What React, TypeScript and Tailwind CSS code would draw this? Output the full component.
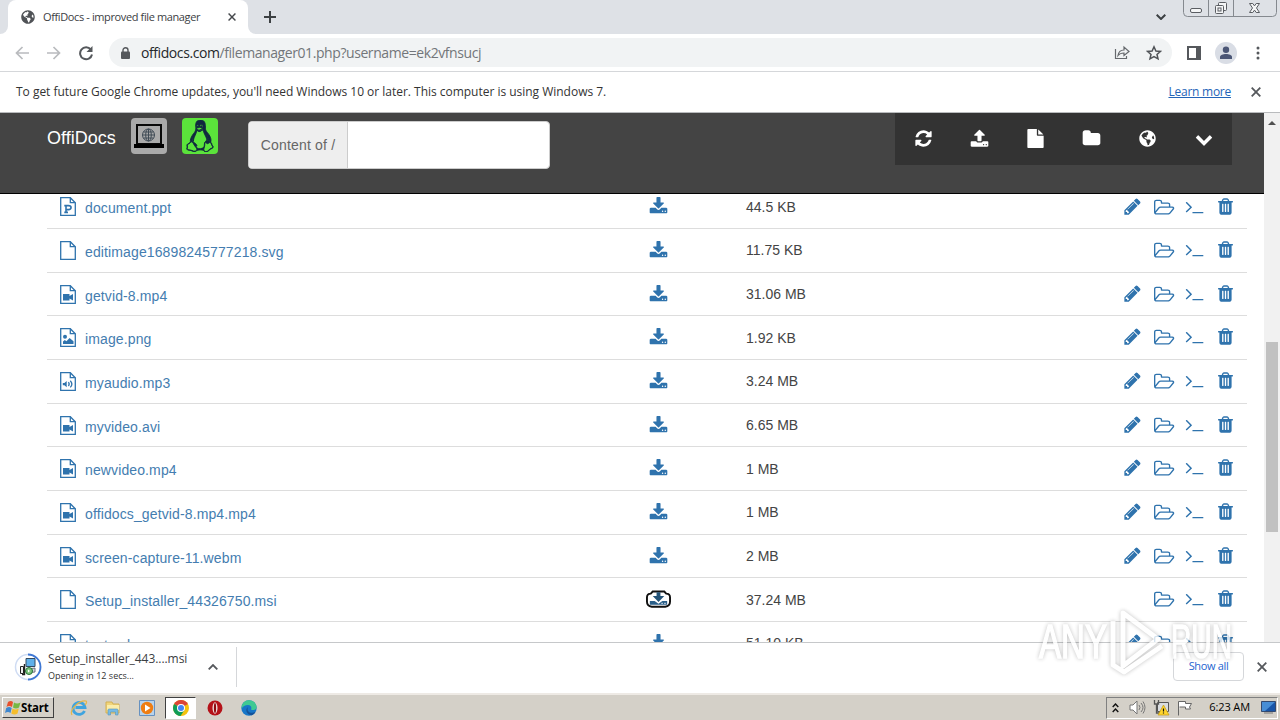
import { FaLinux, FaGlobeAmericas } from "react-icons/fa";

const paths = {
  download:
    "M1344 1344q0-26-19-45t-45-19-45 19-19 45 19 45 45 19 45-19 19-45zm256 0q0-26-19-45t-45-19-45 19-19 45 19 45 45 19 45-19 19-45zm128-224v320q0 40-28 68t-68 28h-1472q-40 0-68-28t-28-68v-320q0-40 28-68t68-28h465l135 136q58 56 136 56t136-56l136-136h464q40 0 68 28t28 68zm-325-569q17 41-14 70l-448 448q-18 19-45 19t-45-19l-448-448q-31-29-14-70 17-39 59-39h256v-448q0-26 19-45t45-19h256q26 0 45 19t19 45v448h256q42 0 59 39z",
  folderOpen:
    "M1781 1055q0-31-53-31h-1088q-40 0-85.5 21.5t-71.5 52.5l-294 363q-18 24-18 40 0 31 53 31h1088q40 0 86-22t71-53l294-363q18-22 18-39zm-1141-159h768v-160q0-40-28-68t-68-28h-576q-40 0-68-28t-28-68v-64q0-40-28-68t-68-28h-320q-40 0-68 28t-28 68v853l256-315q44-53 116-87.5t140-34.5zm1269 159q0 62-46 120l-295 363q-43 53-116 87.5t-140 34.5h-1088q-92 0-158-66t-66-158v-960q0-92 66-158t158-66h320q92 0 158 66t66 158v32h544q92 0 158 66t66 158v160h192q54 0 99 24.5t67 70.5q15 32 15 68z",
  trash:
    "M704 1376v-704q0-14-9-23t-23-9h-64q-14 0-23 9t-9 23v704q0 14 9 23t23 9h64q14 0 23-9t9-23zm256 0v-704q0-14-9-23t-23-9h-64q-14 0-23 9t-9 23v704q0 14 9 23t23 9h64q14 0 23-9t9-23zm256 0v-704q0-14-9-23t-23-9h-64q-14 0-23 9t-9 23v704q0 14 9 23t23 9h64q14 0 23-9t9-23zm-544-992h448l-48-117q-7-9-17-11h-317q-10 2-17 11zm928 32v64q0 14-9 23t-23 9h-96v948q0 83-47 143.5t-113 60.5h-832q-66 0-113-58.5t-47-141.5v-952h-96q-14 0-23-9t-9-23v-64q0-14 9-23t23-9h309l70-167q15-37 54-63t79-26h320q40 0 79 26t54 63l70 167h309q14 0 23 9t9 23z",
  pencil:
    "M491 1536l91-91-235-235-91 91v107h128v128h107zm523-928q0-22-22-22-10 0-17 7l-542 542q-7 7-7 17 0 22 22 22 10 0 17-7l542-542q7-7 7-17zm-54-192l416 416-832 832h-416v-416zm683 96q0 53-37 90l-166 166-416-416 166-165q36-38 90-38 53 0 91 38l235 234q37 39 37 91z",
  terminal:
    "M649 983l-466 466q-10 10-23 10t-23-10l-50-50q-10-10-10-23t10-23l393-393-393-393q-10-10-10-23t10-23l50-50q10-10 23-10t23 10l466 466q10 10 10 23t-10 23zm1079 457v64q0 14-9 23t-23 9h-960q-14 0-23-9t-9-23v-64q0-14 9-23t23-9h960q14 0 23 9t9 23z",
  refresh:
    "M1639 1056q0 5-1 7-64 268-268 434.5t-478 166.5q-146 0-282.5-55t-243.5-157l-129 129q-19 19-45 19t-45-19-19-45v-448q0-26 19-45t45-19h448q26 0 45 19t19 45-19 45l-137 137q71 66 161 102t187 36q134 0 250-65t186-179q11-17 53-117 8-23 30-23h192q13 0 22.5 9.5t9.5 22.5zm25-800v448q0 26-19 45t-45 19h-448q-26 0-45-19t-19-45 19-45l138-138q-148-137-349-137-134 0-250 65t-186 179q-11 17-53 117-8 23-30 23h-199q-13 0-22.5-9.5t-9.5-22.5v-7q65-268 270-434.5t480-166.5q146 0 284 55.5t245 156.5l130-129q19-19 45-19t45 19 19 45z",
  upload:
    "M1344 1472q0-26-19-45t-45-19-45 19-19 45 19 45 45 19 45-19 19-45zm256 0q0-26-19-45t-45-19-45 19-19 45 19 45 45 19 45-19 19-45zm128-224v320q0 40-28 68t-68 28h-1472q-40 0-68-28t-28-68v-320q0-40 28-68t68-28h427q21 56 70.5 92t110.5 36h256q61 0 110.5-36t70.5-92h427q40 0 68 28t28 68zm-325-648q-17 40-59 40h-256v448q0 26-19 45t-45 19h-256q-26 0-45-19t-19-45v-448h-256q-42 0-59-40-17-39 14-69l448-448q18-19 45-19t45 19l448 448q31 30 14 69z",
  file: "M1152 512v-472q22 14 36 28l408 408q14 14 28 36h-472zm-128 32q0 40 28 68t68 28h544v1056q0 40-28 68t-68 28h-1344q-40 0-68-28t-28-68v-1600q0-40 28-68t68-28h800v544z",
  folder:
    "M1728 608v704q0 92-66 158t-158 66h-1216q-92 0-158-66t-66-158v-960q0-92 66-158t158-66h320q92 0 158 66t66 158v32h672q92 0 158 66t66 158z",
  chevron:
    "M1683 808l-742 741q-19 19-45 19t-45-19l-742-741q-19-19-19-45.5t19-45.5l166-165q19-19 45-19t45 19l531 531 531-531q19-19 45-19t45 19l166 165q19 19 19 45.5t-19 45.5z",
};

type IconName = keyof typeof paths;

function Icon({ name, className = "size-[19px]" }: { name: IconName; className?: string }) {
  return (
    <svg viewBox="0 0 1792 1792" className={`shrink-0 overflow-visible fill-current ${className}`}>
      <path d={paths[name]} />
    </svg>
  );
}

type Kind = "plain" | "ppt" | "video" | "image" | "audio";

type Entry = {
  name: string;
  size: string;
  kind: Kind;
  editable: boolean;
  focused?: boolean;
};

const entries: Entry[] = [
  { name: "document.ppt", size: "44.5 KB", kind: "ppt", editable: true },
  { name: "editimage16898245777218.svg", size: "11.75 KB", kind: "plain", editable: false },
  { name: "getvid-8.mp4", size: "31.06 MB", kind: "video", editable: true },
  { name: "image.png", size: "1.92 KB", kind: "image", editable: true },
  { name: "myaudio.mp3", size: "3.24 MB", kind: "audio", editable: true },
  { name: "myvideo.avi", size: "6.65 MB", kind: "video", editable: true },
  { name: "newvideo.mp4", size: "1 MB", kind: "video", editable: true },
  { name: "offidocs_getvid-8.mp4.mp4", size: "1 MB", kind: "video", editable: true },
  { name: "screen-capture-11.webm", size: "2 MB", kind: "video", editable: true },
  { name: "Setup_installer_44326750.msi", size: "37.24 MB", kind: "plain", editable: false, focused: true },
  { name: "testxml", size: "51.10 KB", kind: "plain", editable: true },
];

function FileIcon({ kind }: { kind: Kind }) {
  return (
    <svg viewBox="0 0 16 19" className="h-[19px] w-4 shrink-0" fill="none" stroke="currentColor" strokeWidth="1.3">
      <path d="M.7.7h9.6l5 5v12.6H.7z" />
      <path d="M10.3.7v5h5" />
      {kind === "ppt" && <path d="M4.3 8.6h4.2c3.4 0 3.4 4 0 4H6.2M6 8.6v6.8M4.3 15.4H8" strokeWidth="1.6" />}
      {kind === "video" && <path d="M3 9h6.5v2l3.500-2v6.500l-3.500-2v2H3z" fill="currentColor" stroke="none" />}
      {kind === "image" && (
        <g fill="currentColor" stroke="none">
          <circle cx="5" cy="8.700" r="2" />
          <path d="M3 16v-2.500l1.800-1.600 1.600 1.400 3.200-3.400 3.900 3.400V16z" />
        </g>
      )}
      {kind === "audio" && (
        <>
          <path d="M2.800 11h1.600l2.300-2v6.200l-2.300-2H2.800z" fill="currentColor" stroke="none" />
          <path d="M8.400 10.200c1 1.200 1 2.600 0 3.800M10.300 8.800c2 2.200 2 4.600 0 6.600" />
        </>
      )}
    </svg>
  );
}

function Row({ entry }: { entry: Entry }) {
  return (
    <div className="flex h-[43.67px] shrink-0 border-b border-[#ddd] pt-3 text-[#2f73ad]">
      <div className="flex w-[599px] pl-[13px]">
        <FileIcon kind={entry.kind} />
        <span className="ml-[9px] mt-[1px] text-[14px] leading-[20px] tracking-[0.12px] text-[#447db0]">{entry.name}</span>
      </div>
      <div className="w-[100px] pl-[2.500px]">
        {entry.focused ? (
          <svg viewBox="0 0 26 20" className="-ml-[2.500px] -mt-px h-5 w-[25px]">
            <path
              d="M7 2.200h12l2 2.200c2.800 0 4 1.300 4 4v4.300c0 3.500-2 5-5 5.300H6c-3-.3-5-1.800-5-5.300V8.400c0-2.700 1.200-4 4-4z"
              fill="#fff"
              stroke="#111"
              strokeWidth="2"
            />
            <path d="M11 3h4v4h4l-6 6-6-6h4z" fill="#225277" />
            <path d="M4 12h5l4 3 4-3h5v4H4z" fill="#2a5f89" />
            <path d="M16 14.500h1.500M19 14.500h1.500" stroke="#fff" />
          </svg>
        ) : (
          <Icon name="download" />
        )}
      </div>
      <span className="-mt-[0.5px] text-[14px] leading-[20px] text-[#444]">{entry.size}</span>
      <div className="-mt-[0.8px] ml-auto flex gap-3 pr-[11.600px]">
        {entry.editable && <Icon name="pencil" />}
        <Icon name="folderOpen" />
        <Icon name="terminal" />
        <Icon name="trash" />
      </div>
    </div>
  );
}

function Cross({ className = "size-[10px]" }: { className?: string }) {
  return (
    <svg viewBox="0 0 10 10" className={`shrink-0 ${className}`} stroke="currentColor" strokeWidth="1.8">
      <path d="M.7.7l8.600 8.600M9.300.7L.7 9.300" />
    </svg>
  );
}

function TabStrip() {
  return (
    <div className="flex h-[34px] bg-[#dee1e6]">
      <div className="w-2 bg-white">
        <div className="h-full rounded-br-lg bg-[#dee1e6]" />
      </div>
      <div className="flex h-[34px] w-60 items-center rounded-t-lg bg-white pl-[13px] pr-3">
        <FaGlobeAmericas className="size-[14px] text-[#505357]" />
        <span className="ml-2 whitespace-nowrap text-[11px] tracking-[-0.38px] text-[#3c4043]">OffiDocs - improved file manager</span>
        <Cross className="ml-auto size-[8px] text-[#45484c]" />
      </div>
      <div className="w-2 self-end bg-white">
        <div className="h-2 rounded-bl-lg bg-[#dee1e6]" />
      </div>
      <svg viewBox="0 0 12 12" className="ml-2 mt-[11px] size-3" stroke="#3c4043" strokeWidth="2">
        <path d="M6 0v12M0 6h12" />
      </svg>
      <svg viewBox="0 0 10 6" className="ml-auto mr-[17px] mt-[14px] h-[6px] w-[10px]" fill="none" stroke="#3c4043" strokeWidth="2">
        <path d="M.7.7L5 5 9.300.7" />
      </svg>
      <svg viewBox="0 0 94 17" className="mr-[3px] h-[17px] w-[94px]" fill="none" stroke="#85898f">
        <path d="M.5 0v12.500q0 4 4 4h85q4 0 4-4V0M25.500 0v16M50.500 0v16" />
        <g stroke="#5a5d62" fill="#f4f5f6">
          <rect x="7.500" y="8.500" width="11" height="4" rx="1.500" />
          <rect x="35.500" y="2.500" width="8" height="8" rx="1" />
          <rect x="32.500" y="5.500" width="8" height="8" rx="1" />
          <rect x="35" y="8" width="3" height="3" />
          <path d="M66.500 3.500h3.300l1.700 2.400 1.700-2.400h3.300l-3 4.500 3 4.500h-3.300l-1.700-2.400-1.700 2.400h-3.300l3-4.500z" />
        </g>
      </svg>
    </div>
  );
}

function Toolbar() {
  return (
    <div className="flex h-[38px] items-center border-b border-[#d5d7da] bg-white pl-[15px] pr-[20px]">
      <svg viewBox="0 0 78 16" className="h-4 w-[78px]" fill="none" stroke="#b9bbbe" strokeWidth="1.700">
        <path d="M14 8H1.500M7.500 2l-6 6 6 6M32 8h12.500M38.500 2l6 6-6 6" />
        <path d="M75.800 4.500A6 6 0 1 0 77 9.500" stroke="#55585c" strokeWidth="2" />
        <path d="M77.500 1v6h-6z" fill="#55585c" stroke="none" />
      </svg>
      <div className="ml-[16px] flex h-[29px] w-[1063px] items-center rounded-full bg-[#f1f3f4] pl-3 pr-[10px]">
        <svg viewBox="0 0 9 12" className="h-3 w-[9px]">
          <rect y="4.500" width="9" height="7.500" rx="1" fill="#55585c" />
          <path d="M2 5V3.200a2.500 2.500 0 0 1 5 0V5" fill="none" stroke="#55585c" strokeWidth="1.400" />
        </svg>
        <span className="ml-[11px] text-[14px] tracking-[-0.42px] text-[#73767a]">
          <span className="text-[#26282b]">offidocs.com</span>/filemanager01.php?username=ek2vfnsucj
        </span>
        <svg viewBox="0 0 16 15" className="ml-auto h-[15px] w-4" fill="none" stroke="#66696d" strokeWidth="1.200">
          <path d="M1.500 4v9.500h11V11M4 10.500c.5-3.500 2.500-5.500 6-5.500V2l5 4.500-5 4V8c-2.800 0-4.600.7-6 2.500z" />
        </svg>
        <svg viewBox="0 0 16 16" className="ml-4 size-4" fill="none" stroke="#505357" strokeWidth="1.500">
          <path d="M8 1.800l1.900 4.200 4.500.4-3.400 3 1 4.400L8 11.500l-4 2.300 1-4.400-3.400-3 4.500-.4z" />
        </svg>
      </div>
      <svg viewBox="0 0 14 14" className="ml-[15px] size-[14px]">
        <path d="M1 1h12v12H1z" fill="#fff" stroke="#55585c" strokeWidth="2" />
        <path d="M9 0h5v14H9z" fill="#55585c" />
      </svg>
      <svg viewBox="0 0 22 22" className="ml-[14px] size-[22px]">
        <circle cx="11" cy="11" r="11" fill="#d9dde5" />
        <circle cx="11" cy="7.800" r="3.200" fill="#4b5676" />
        <path d="M5 17v-2c0-4 12-4 12 0v2z" fill="#4b5676" />
      </svg>
      <svg viewBox="0 0 4 14" className="ml-auto h-[14px] w-1" fill="#55585c">
        <circle cx="2" cy="2" r="1.500" />
        <circle cx="2" cy="7" r="1.500" />
        <circle cx="2" cy="12" r="1.500" />
      </svg>
    </div>
  );
}

function PageHeader() {
  const actions: IconName[] = ["refresh", "upload", "file", "folder"];
  return (
    <div className="flex h-[81px] shrink-0 border-b border-black bg-[#444] pl-[47px]">
      <span className="mt-[13px] w-[84px] text-[18px] leading-6 text-white">OffiDocs</span>
      <div className="mt-[5px] size-9 rounded bg-[#aaa]">
        <svg viewBox="0 0 36 36" className="size-9" fill="none">
          <path d="M6 7h24v19H6z" stroke="#090909" strokeWidth="2" />
          <path d="M3 26h30v4H3z" fill="#000" />
          <g stroke="#3f4a55" strokeWidth="1">
            <circle cx="17.500" cy="17" r="6" />
            <ellipse cx="17.500" cy="17" rx="2.800" ry="6" />
            <path d="M11.500 17h12M17.500 11v12M12.500 14h10M12.500 20h10" />
          </g>
        </svg>
      </div>
      <div className="ml-[15px] mt-[5px] flex size-9 items-center justify-center rounded bg-[#5be33b]">
        <FaLinux className="h-8 w-7 stroke-[#10283f] stroke-[14px] text-[#10283f]" />
      </div>
      <div className="ml-[30px] mt-[8px] flex h-12 w-[302px] overflow-hidden rounded border border-[#ccc] bg-white">
        <span className="flex w-[99px] items-center justify-center whitespace-nowrap border-r border-[#ccc] bg-[#eee] text-[14px] tracking-[0.18px] text-[#666]">
          Content of /
        </span>
      </div>
      <div className="ml-auto mr-8 flex h-[52px] w-[337px] bg-[#333] text-white">
        {actions.map((name) => (
          <div key={name} className="flex h-[50px] w-[56.200px] items-center justify-center">
            <Icon name={name} />
          </div>
        ))}
        <div className="flex h-[50px] w-[56.200px] items-center justify-center">
          <FaGlobeAmericas className="size-[17px]" />
        </div>
        <div className="flex h-[50px] w-[56px] items-center justify-center pt-[2px]">
          <Icon name="chevron" className="size-[18px]" />
        </div>
      </div>
    </div>
  );
}

function Watermark() {
  return (
    <div className="pointer-events-none absolute left-[1036px] top-[606px] opacity-80">
      <svg viewBox="0 0 200 70" className="h-[70px] w-[200px] overflow-visible drop-shadow-[0_0_2px_rgba(0,0,0,0.3)]" fill="none">
        <g fill="#fff" stroke="#fff" strokeWidth="1.500" fontFamily="Liberation Sans" fontSize="48">
          <text x="3" y="52" textLength="68" lengthAdjust="spacingAndGlyphs">
            ANY
          </text>
          <text x="135" y="52" textLength="61" lengthAdjust="spacingAndGlyphs">
            RUN
          </text>
        </g>
        <path d="M87 7l35 26-35 27zM77 15v44l11 7 38-26" stroke="#fff" strokeWidth="5" strokeLinejoin="round" />
      </svg>
    </div>
  );
}

function DownloadShelf() {
  return (
    <div className="flex h-[51px] border-t border-[#c6c8ca] bg-white">
      <svg viewBox="0 0 28 28" className="ml-[14px] mt-[10px] size-7" fill="none">
        <circle cx="14" cy="14" r="12.500" stroke="#cfdcf3" strokeWidth="1.500" />
        <path d="M14 1.500A12.500 12.500 0 0 1 14 26.500" stroke="#3f78d4" strokeWidth="1.800" />
        <path d="M12 5.500h9v8h-9z" fill="#5fb0ea" stroke="#344a60" />
        <path d="M13 16l8-1v4l-8 1z" fill="#cfd5dc" stroke="#556" strokeWidth=".8" />
        <path d="M6.500 13.500h3v7h-3z" fill="#eee" stroke="#222" />
        <path d="M10.500 11v10.500H8" stroke="#222" strokeWidth="1.400" />
        <circle cx="15" cy="18" r="3.500" fill="#7cc47c" stroke="#267038" />
        <path d="M14 16.500v3l2-1.500z" fill="#fff" />
      </svg>
      <div className="ml-[6px] mt-[8px] w-[144px] whitespace-nowrap">
        <div className="text-[12px] leading-4 tracking-[-0.05px] text-[#3c4043]">Setup_installer_443....msi</div>
        <div className="mt-[2px] text-[9px] leading-[14px] text-[#333]">Opening in 12 secs...</div>
      </div>
      <svg viewBox="0 0 10 6" className="ml-[16px] mt-[21px] h-[6px] w-[10px]" fill="none" stroke="#55585c" strokeWidth="1.800">
        <path d="M.7 5.300L5 1l4.300 4.300" />
      </svg>
      <div className="ml-[18px] mt-1 h-10 w-px bg-[#d5d7da]" />
      <div className="ml-auto mr-[13px] mt-[9px] flex h-[29px] w-[71px] items-center justify-center rounded border border-[#d5d7da] text-[11px] tracking-[-0.35px] text-[#2464cf]">
        Show all
      </div>
      <Cross className="mr-[13px] mt-[19px] size-[10px] text-[#55585c]" />
    </div>
  );
}

function Taskbar() {
  return (
    <div className="flex h-[27px] items-center border-t-2 border-[#eeeae5] bg-[#d4d0c8]">
      <div className="ml-[2px] flex h-[21px] w-[52px] items-center border border-b-[#404040] border-l-white border-r-[#404040] border-t-white pl-[2px]">
        <svg viewBox="0 0 16 15" className="h-[15px] w-4">
          <path d="M3 2q3-2 5 0L7 7Q4 5 1.500 7z" fill="#e8502c" />
          <path d="M9 2.500q3 2 6.500 0L14 7.500q-3 2-6 0z" fill="#76b843" />
          <path d="M1.200 8q3-2 5.500 0l-1.200 5Q3 11 0 13z" fill="#3e87cf" />
          <path d="M7.500 8.500q3 2 6.300 0l-1.300 5q-3 2-6.200 0z" fill="#f5bd2c" />
        </svg>
        <span className="text-[11.500px] font-bold tracking-[-0.2px] text-black">Start</span>
      </div>
      <svg viewBox="0 0 18 18" className="ml-[16px] size-[18px]" fill="none">
        <path d="M14.500 12a6 6 0 1 1 .5-3.500H5.500" stroke="#3fa4df" strokeWidth="2.800" />
        <path d="M2 16C-1 11 9 1 16 2c1 1 0 3-1 4" stroke="#e5b74a" strokeWidth="1.200" />
      </svg>
      <svg viewBox="0 0 18 18" className="ml-[16px] size-[18px]">
        <path d="M2 3h6l1 2h6v9H2z" fill="#f1d57a" stroke="#d2b055" />
        <path d="M3 6h12v5H3z" fill="#fbedaa" />
        <path d="M4 16v-5q0-1 1-1h8q1 0 1 1v5h-2.500v-3h-5v3z" fill="#78bbe4" stroke="#5795ba" strokeWidth=".6" />
      </svg>
      <svg viewBox="0 0 16 16" className="ml-[17px] size-4">
        <path d="M.5.5h15v15H.5z" fill="#b8d3ec" stroke="#6691c0" />
        <circle cx="8" cy="8" r="6.200" fill="#ef7d12" />
        <path d="M6 4.500v7L11.500 8z" fill="#fff" />
      </svg>
      <div className="ml-[10px] flex h-[22px] w-[31px] items-center justify-center border border-b-white border-l-[#404040] border-r-white border-t-[#404040] bg-white">
        <svg viewBox="0 0 16 16" className="size-4">
          <circle cx="8" cy="8" r="8" fill="#f4c20d" />
          <path d="M8 8L1.100 4A8 8 0 0 1 14.900 4z" fill="#db4437" />
          <path d="M8 8L1.100 4A8 8 0 0 0 7.500 16l4-6z" fill="#0f9d58" />
          <circle cx="8" cy="8" r="4" fill="#fff" />
          <circle cx="8" cy="8" r="3" fill="#4285f4" />
        </svg>
      </div>
      <svg viewBox="0 0 16 16" className="ml-[11px] size-4">
        <circle cx="8" cy="8" r="7.500" fill="#b51219" />
        <ellipse cx="8" cy="8" rx="2.500" ry="5.700" fill="#f0dede" />
        <ellipse cx="8" cy="8" rx="1.100" ry="5" fill="#8d090e" />
      </svg>
      <svg viewBox="0 0 16 16" className="ml-[18px] size-4">
        <circle cx="8" cy="8" r="7.700" fill="#1676c8" />
        <path d="M1 5a7.700 7.700 0 0 1 14.500 1c.8 4-3.500 4.700-5.500 3.500 1-2 0-4.500-3-4.500C4 5 2 6 .5 9z" fill="#3fc993" />
        <path d="M7 7c-2 5 3 7 7.500 5-1 1.500-2 2.500-4 3.300C5 14.500 4 9 7 7z" fill="#155298" />
      </svg>
      <div className="ml-auto mr-[2px] flex h-[22px] w-[172px] items-center border border-b-white border-l-[#808080] border-r-white border-t-[#808080] pl-[5px]">
        <svg viewBox="0 0 7 10" className="h-[10px] w-[7px]" fill="none" stroke="#111" strokeWidth="1.400">
          <path d="M.7 4l2.800-3 2.800 3M.7 9l2.800-3 2.800 3" />
        </svg>
        <svg viewBox="0 0 17 15" className="ml-[10px] h-[15px] w-[17px]" fill="#fff" stroke="#777">
          <path d="M1 5h3l4-4v13l-4-4H1z" />
          <path d="M10 5q2 2.500 0 5M12 3q4 4.500 0 9M14 1.500q4 6 0 12" fill="none" />
        </svg>
        <svg viewBox="0 0 17 17" className="ml-[7px] size-[17px]">
          <path d="M4.500 3.500h11v9h-11z" fill="#d9dce0" stroke="#555" />
          <path d="M1.500 1v4h4V1M3.500 5v9h4" fill="none" stroke="#555" strokeWidth="1.300" />
          <path d="M10.500 6l5.500 10H5z" fill="#ffd52e" stroke="#c39910" strokeWidth=".7" />
          <path d="M10.500 9.500v3M10.500 13.500v1" stroke="#111" strokeWidth="1.200" />
        </svg>
        <svg viewBox="0 0 16 16" className="ml-[7px] size-4" fill="#fff" stroke="#666">
          <path d="M1.500 15.500v-14h7v2h6l-2 3.500 1 2h-5v-2h-6" />
        </svg>
        <span className="ml-auto whitespace-nowrap text-[11px] tracking-[-0.1px] text-black">6:23 AM</span>
        <svg viewBox="0 0 15 13" className="ml-[11px] mr-px h-[13px] w-[15px]">
          <path d="M.5.5h14v10H.5z" fill="#1855a8" stroke="#334a70" />
          <path d="M1 1h13L4 10H1z" fill="#478ed6" />
          <path d="M3 12h9" stroke="#777" />
        </svg>
      </div>
    </div>
  );
}

export default function App() {
  return (
    <div className="relative flex h-[720px] w-[1280px] flex-col overflow-hidden bg-white font-[Open_Sans,sans-serif]">
      <TabStrip />
      <Toolbar />
      <div className="flex h-[41px] items-center border-b border-[#b9bbbd] pl-4 pr-[19px] text-[12px] text-[#333]">
        <span className="tracking-[-0.02px]">
          To get future Google Chrome updates, you'll need Windows 10 or later. This computer is using Windows 7.
        </span>
        <span className="ml-auto tracking-[-0.25px] text-[#2464b8] underline">Learn more</span>
        <Cross className="ml-5 size-[10px] text-[#55585c]" />
      </div>
      <div className="flex h-[529px] font-[Liberation_Sans,sans-serif]">
        <div className="flex w-[1264px] flex-col overflow-hidden">
          <PageHeader />
          <div className="h-[448px] overflow-hidden pl-[47px] pr-[17px]">
            <div className="-mt-[8.700px] flex flex-col">
              {entries.map((entry) => (
                <Row key={entry.name} entry={entry} />
              ))}
            </div>
          </div>
        </div>
        <div className="flex w-4 flex-col items-center bg-[#f1f1f1]">
          <svg viewBox="0 0 8 4" className="mt-2 h-1 w-2" fill="#505050">
            <path d="M0 4l4-4 4 4z" />
          </svg>
          <div className="mt-[217px] h-[190px] w-3 bg-[#c1c1c1]" />
        </div>
      </div>
      <DownloadShelf />
      <Taskbar />
      <Watermark />
    </div>
  );
}
